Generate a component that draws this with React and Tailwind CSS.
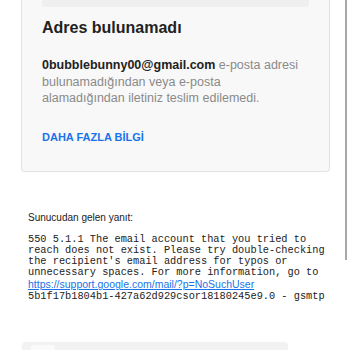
import React from "react";

const sans = { fontFamily: "'Liberation Sans', Arial, sans-serif" };

export default function App() {
  return (
    <div className="relative h-[350px] w-[350px] overflow-hidden bg-white" style={sans}>
      {/* Bounce card */}
      <div className="ml-[21px] w-[309px] rounded-b-[4px] border border-t-0 border-[#e3e3e3] bg-[#f8f8f8] px-[20px] pb-[27px]">
        <div className="h-[7px] rounded-b-[3px] bg-[#efefef]" />
        <h1 className="mt-[11px] text-[16px] font-bold leading-[20px] text-[#222]">Adres bulunamadı</h1>
        <p className="mt-[19px] text-[12.5px] leading-[16.5px] text-[#8a8a8a]">
          <span className="font-bold text-[#222]">0bubblebunny00@gmail.com</span> e-posta adresi
          <br />
          bulunamadığından veya e-posta
          <br />
          alamadığından iletiniz teslim edilemedi.
        </p>
        <a className="mt-[23px] block text-[11px] font-bold leading-[14px] text-[#1a73e8]">DAHA FAZLA BİLGİ</a>
      </div>

      {/* Server response */}
      <div className="ml-[28px] mt-[39px]">
        <p className="text-[10px] leading-[13px] text-[#222]">Sunucudan gelen yanıt:</p>
        <div
          className="mt-[10px] text-[10.3px] leading-[11.2px] text-[#222]"
          style={{ fontFamily: "'Liberation Mono', 'Courier New', monospace" }}
        >
          <div>550 5.1.1 The email account that you tried to</div>
          <div>reach does not exist. Please try double-checking</div>
          <div>the recipient's email address for typos or</div>
          <div>unnecessary spaces. For more information, go to</div>
          <a className="block text-[10.5px] leading-[12.5px] text-[#1a73e8] underline" style={sans}>
            https://support.google.com/mail/?p=NoSuchUser
          </a>
          <div>5b1f17b1804b1-427a62d929csor18180245e9.0 - gsmtp</div>
        </div>
      </div>

      {/* Next card peeking at the bottom */}
      <div className="absolute left-[22px] top-[342px] h-[20px] w-[266px] rounded-t-[4px] bg-[#f2f2f2] pl-[9px] pt-[3px]">
        <div className="h-[8px] w-[24px] rounded-[2px] bg-[#fafafa]" />
      </div>

      {/* Scrollbar */}
      <div className="absolute right-[3px] top-0 h-[260px] w-[2px] bg-[#a8a8a8]" />
    </div>
  );
}
